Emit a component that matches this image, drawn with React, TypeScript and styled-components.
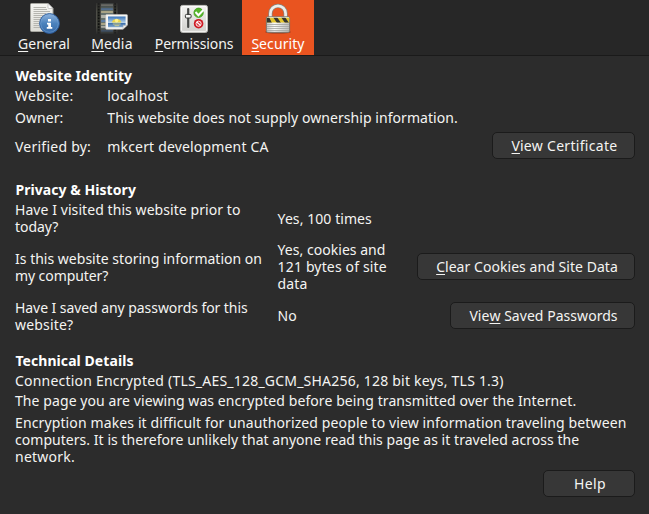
import React from "react";
import styled, { createGlobalStyle } from "styled-components";

const GlobalStyle = createGlobalStyle`
  * { box-sizing: border-box; }
  body {
    margin: 0;
    background: #2c2c2c;
    color: #f4f4f2;
    font: 14px/17px "Noto Sans", "Open Sans", sans-serif;
    overflow: hidden;
  }
`;

const Window = styled.div`
  height: 514px;
  display: flex;
  flex-direction: column;
  background: #2c2c2c;
`;

const Toolbar = styled.nav`
  display: flex;
  flex: none;
  height: 56px;
  padding-left: 10px;
  background: #272727;
  border-bottom: 1px solid #1a1a1a;
`;

const Tab = styled.button<{ $width: number; $active?: boolean }>`
  width: ${(p) => p.$width}px;
  display: flex;
  flex-direction: column;
  align-items: center;
  gap: 1px;
  margin: 0;
  padding: 2px 0 0;
  border: 0;
  font: inherit;
  color: ${(p) => (p.$active ? "#fff" : "#f4f4f2")};
  background: ${(p) => (p.$active ? "#e95420" : "transparent")};
`;

const Icon = styled.svg`
  display: block;
  width: 32px;
  height: 32px;
`;

const Line = styled.span<{ $track?: number }>`
  display: block;
  white-space: nowrap;
  letter-spacing: ${(p) => p.$track ?? 0}px;
`;

const Key = styled.span`
  text-decoration: underline;
  text-decoration-thickness: 1px;
  text-underline-offset: 2px;
  text-decoration-skip-ink: none;
  letter-spacing: 0;
`;

const Content = styled.main`
  flex: 1;
  display: flex;
  flex-direction: column;
  padding: 11px 14px 0 15px;
`;

const Heading = styled.h2`
  margin: 0 0 3px;
  padding-left: 0.4px;
  font-size: inherit;
  font-weight: 700;
  color: #fff;
`;

const IdentityGrid = styled.div`
  display: grid;
  grid-template-columns: 92.3px 1fr auto;
  grid-template-rows: 22px 23px 27px;
  align-items: start;
  margin-bottom: 22px;
`;

const Wide = styled.div`
  grid-column: 2 / -1;
`;

const PrivacyGrid = styled.div`
  display: grid;
  grid-template-columns: 262.6px 1fr auto;
  grid-template-rows: 34px 52px 34px;
  row-gap: 6px;
  align-items: center;
  margin-bottom: 19px;
`;

const Block = styled.div<{ $top?: number; $bottom?: number }>`
  padding-top: ${(p) => p.$top ?? 0}px;
  padding-bottom: ${(p) => p.$bottom ?? 0}px;
`;

const ButtonSlot = styled.div`
  display: flex;
  justify-content: flex-end;
  padding-bottom: 1px;
`;

const Details = styled.div`
  display: flex;
  flex-direction: column;
`;

const Footer = styled.footer`
  display: flex;
  justify-content: flex-end;
  margin-top: 5px;
`;

const Button = styled.button<{ $width: number; $track: number }>`
  width: ${(p) => p.$width}px;
  height: 27px;
  padding: 0 0 0 2px;
  border: 1px solid #1b1b1b;
  border-radius: 5px;
  background: #373737;
  color: inherit;
  font: inherit;
  letter-spacing: ${(p) => p.$track}px;
  white-space: nowrap;
`;

const GeneralIcon = () => (
  <Icon viewBox="0 0 32 32">
    <defs>
      <linearGradient id="paper" x1="0" y1="0" x2="0" y2="1">
        <stop offset="0" stopColor="#f6f6f2" />
        <stop offset="1" stopColor="#dcdcd6" />
      </linearGradient>
      <linearGradient id="info" x1="0" y1="0" x2="0" y2="1">
        <stop offset="0" stopColor="#8fb4de" />
        <stop offset=".5" stopColor="#4b82bd" />
        <stop offset="1" stopColor="#3568a6" />
      </linearGradient>
    </defs>
    <path d="M3.5 1.5H20l5 5V29.5H3.5a1 1 0 0 1-1-1V2.5a1 1 0 0 1 1-1z" fill="url(#paper)" stroke="#a5a59f" />
    <path d="M20 1.5v4q0 1 1 1h4z" fill="#fff" stroke="#aaa" strokeWidth=".6" />
    <path d="M5.5 5.5H18M5.5 7.5H19M5.5 9.5H22M5.5 11.5H18M5.5 13.5H15M5.5 15.5H14M5.5 17.5H12M5.5 19.5H11M5.5 21.5H11M5.5 23.5H11M5.5 25.5H12" stroke="#b5b5af" strokeWidth="1" />
    <circle cx="21.5" cy="21.5" r="9.9" fill="url(#info)" stroke="#2b5b9b" strokeWidth="1" />
    <circle cx="21.5" cy="21.5" r="8.8" fill="none" stroke="#7da8d8" strokeWidth=".8" opacity=".6" />
    <path d="M20 17h3v2.6h-3zM19 20.7h4V25h1.3v1.8h-5.5V25h1.4v-2.5H19z" fill="#fff" />
  </Icon>
);

const MediaIcon = () => (
  <Icon viewBox="0 0 32 32">
    <defs>
      <linearGradient id="filmfade" x1="0" y1="0" x2="0" y2="1">
        <stop offset="0" stopColor="#fff" stopOpacity=".2" />
        <stop offset=".3" stopColor="#fff" />
        <stop offset=".75" stopColor="#fff" />
        <stop offset="1" stopColor="#fff" stopOpacity=".1" />
      </linearGradient>
      <mask id="film">
        <rect width="24" height="32" fill="url(#filmfade)" />
      </mask>
      <linearGradient id="sky" x1="0" y1="0" x2="0" y2="1">
        <stop offset="0" stopColor="#3974b9" />
        <stop offset=".58" stopColor="#b8d4ea" />
        <stop offset=".6" stopColor="#386ba8" />
        <stop offset="1" stopColor="#85abd3" />
      </linearGradient>
    </defs>
    <g mask="url(#film)">
      <path d="M.5 1H21v31H.5z" fill="#35362f" />
      <path d="M5 1h12v31H5z" fill="#66736f" />
      <path d="M5 2h12v2H5zM5 13h12v3H5zM5 24h12v2H5z" fill="#b2b4aa" />
      <path d="M5 6h12v2H5zM5 18h12v2H5zM5 28h12v2H5z" fill="#5d7da2" />
      <path d="M5 9h12v2H5zM5 21h12v2H5z" fill="#aaa586" />
      <path d="M2.7 1v31M19.2 1v31" stroke="#0f100f" strokeWidth="1.7" strokeDasharray="1.7 1.2" />
      <path d="M.6 1v31M4.7 1v31M17.3 1v31M21 1v31" stroke="#77776f" strokeWidth=".5" />
    </g>
    <path d="M10.7 12.5h19.8a1 1 0 0 1 1 1V23l-4.6 4.3H10.7a1 1 0 0 1-1-1V13.5a1 1 0 0 1 1-1z" fill="#f7f7f3" stroke="#bbb" strokeWidth=".6" />
    <path d="M12 14.5h17.6v8.8l-2.7 2H12z" fill="url(#sky)" />
    <path d="M15.8 20.4a5 4.6 0 0 1 9.7 0z" fill="#e8d44c" />
    <circle cx="20.6" cy="18.6" r="1.8" fill="#fff18a" />
    <path d="M16.8 22h7.8M18.5 23.7h4.8" stroke="#d7d287" strokeWidth=".9" />
    <path d="M26.9 27.2l.4-4.2q2 1 4.2 0z" fill="#f3f3ef" stroke="#aaa" strokeWidth=".5" />
  </Icon>
);

const PermissionsIcon = () => (
  <Icon viewBox="0 0 32 32">
    <defs>
      <linearGradient id="panel" x1="0" y1="0" x2="0" y2="1">
        <stop offset="0" stopColor="#f3f3f1" />
        <stop offset="1" stopColor="#d1d1cd" />
      </linearGradient>
    </defs>
    <rect x="2.5" y="3.4" width="27" height="27" rx="2" fill="url(#panel)" stroke="#bdbdb9" />
    <rect x="3.5" y="4.4" width="25" height="25" rx="1.2" fill="none" stroke="#fff" opacity=".8" />
    <path d="M10.2 7v18" stroke="#454745" strokeWidth="2.2" strokeLinecap="round" />
    <rect x="7.4" y="12.4" width="5.7" height="3.6" rx="1" fill="#f5f5f3" stroke="#343634" strokeWidth="1" />
    <circle cx="20.6" cy="10.8" r="4.7" fill="#56b52a" stroke="#389815" strokeWidth=".7" />
    <path d="M17.5 10l2.9 3.2 5-5.2" fill="none" stroke="#fff" strokeWidth="2" />
    <circle cx="20.6" cy="21.7" r="4.8" fill="#cf1b24" />
    <circle cx="20.6" cy="21.7" r="2.6" fill="#d9383f" stroke="#fff" strokeWidth=".9" />
    <path d="M18.7 20l3.8 3.4" stroke="#fff" strokeWidth="1.2" />
  </Icon>
);

const LockIcon = () => (
  <Icon viewBox="0 0 32 32">
    <defs>
      <linearGradient id="metal" x1="0" y1="0" x2="1" y2="0">
        <stop offset="0" stopColor="#c6c6c3" />
        <stop offset=".35" stopColor="#fafaf8" />
        <stop offset="1" stopColor="#bcbcb8" />
      </linearGradient>
      <clipPath id="band">
        <path d="M4.8 15.5h22.4v5H4.8z" />
      </clipPath>
    </defs>
    <ellipse cx="16" cy="30" rx="13" ry="1.8" fill="#70321f" opacity=".5" />
    <path d="M8.4 16v-4.6a7.6 7.6 0 0 1 15.2 0V16" fill="none" stroke="#858783" strokeWidth="4.1" />
    <path d="M8.4 16v-4.6a7.6 7.6 0 0 1 15.2 0V16" fill="none" stroke="#eeeeec" strokeWidth="2.7" />
    <rect x="4.4" y="14.8" width="23.2" height="15.5" rx="1.4" fill="url(#metal)" stroke="#747672" strokeWidth=".9" />
    <path d="M5 22.5h22M5 24.5h22M5 26.5h22M5 28.5h22" stroke="#a1a39f" strokeWidth=".8" />
    <g clipPath="url(#band)">
      <path d="M4 15h24v6H4z" fill="#e3c52d" />
      <path d="M4 15h3l3 6H4zM11 15h4l4 6h-4zM19 15h4l4 6h-4z" fill="#34352e" />
    </g>
    <path d="M5 15.4h22" stroke="#fff" strokeWidth=".8" opacity=".65" />
  </Icon>
);

const TABS = [
  { key: "G", rest: "eneral", width: 68, track: 0.068, Drawing: GeneralIcon },
  { key: "M", rest: "edia", width: 68, track: 0.171, Drawing: MediaIcon },
  { key: "P", rest: "ermissions", width: 96, track: -0.1, Drawing: PermissionsIcon },
  { key: "S", rest: "ecurity", width: 72, track: 0.085, Drawing: LockIcon, active: true },
];

export default function App() {
  return (
    <Window>
      <GlobalStyle />
      <Toolbar>
        {TABS.map(({ key, rest, width, track, Drawing, active }) => (
          <Tab key={key} $width={width} $active={active}>
            <Drawing />
            <Line $track={track}>
              <Key>{key}</Key>
              {rest}
            </Line>
          </Tab>
        ))}
      </Toolbar>
      <Content>
        <Heading>
          <Line $track={0.057}>Website Identity</Line>
        </Heading>
        <IdentityGrid>
          <Line $track={0.269}>Website:</Line>
          <Wide>
            <Line $track={0.213}>localhost</Line>
          </Wide>
          <Line $track={0.066}>Owner:</Line>
          <Wide>
            <Line $track={0.059}>This website does not supply ownership information.</Line>
          </Wide>
          <Block $top={6}>
            <Line $track={0.241}>Verified by:</Line>
          </Block>
          <Block $top={6}>
            <Line $track={0.172}>mkcert development CA</Line>
          </Block>
          <Button $width={143} $track={0.299}>
            <Key>V</Key>iew Certificate
          </Button>
        </IdentityGrid>

        <Heading>
          <Line $track={0.061}>Privacy &amp; History</Line>
        </Heading>
        <PrivacyGrid>
          <Block>
            <Line $track={0.07}>Have I visited this website prior to</Line>
            <Line $track={-0.042}>today?</Line>
          </Block>
          <Block $top={1}>
            <Line $track={0.074}>Yes, 100 times</Line>
          </Block>
          <span />
          <Block>
            <Line $track={0.012}>Is this website storing information on</Line>
            <Line $track={-0.086}>my computer?</Line>
          </Block>
          <Block $bottom={1}>
            <Line $track={0.032}>Yes, cookies and</Line>
            <Line $track={0.155}>121 bytes of site</Line>
            <Line $track={0.094}>data</Line>
          </Block>
          <ButtonSlot>
            <Button $width={218} $track={0.049}>
              <Key>C</Key>lear Cookies and Site Data
            </Button>
          </ButtonSlot>
          <Block>
            <Line $track={-0.065}>Have I saved any passwords for this</Line>
            <Line $track={0.175}>website?</Line>
          </Block>
          <Block $bottom={1}>
            <Line>No</Line>
          </Block>
          <ButtonSlot>
            <Button $width={185} $track={0.04}>
              Vie<Key>w</Key> Saved Passwords
            </Button>
          </ButtonSlot>
        </PrivacyGrid>

        <Heading>
          <Line $track={0.068}>Technical Details</Line>
        </Heading>
        <Details>
          <Line $track={0.211}>Connection Encrypted (TLS_AES_128_GCM_SHA256, 128 bit keys, TLS 1.3)</Line>
          <Block $top={3} $bottom={5}>
            <Line $track={0.084}>The page you are viewing was encrypted before being transmitted over the Internet.</Line>
          </Block>
          <Line $track={0.124}>Encryption makes it difficult for unauthorized people to view information traveling between</Line>
          <Line $track={0.041}>computers. It is therefore unlikely that anyone read this page as it traveled across the</Line>
          <Line $track={0.224}>network.</Line>
        </Details>
        <Footer>
          <Button $width={92} $track={0.373}>Help</Button>
        </Footer>
      </Content>
    </Window>
  );
}
